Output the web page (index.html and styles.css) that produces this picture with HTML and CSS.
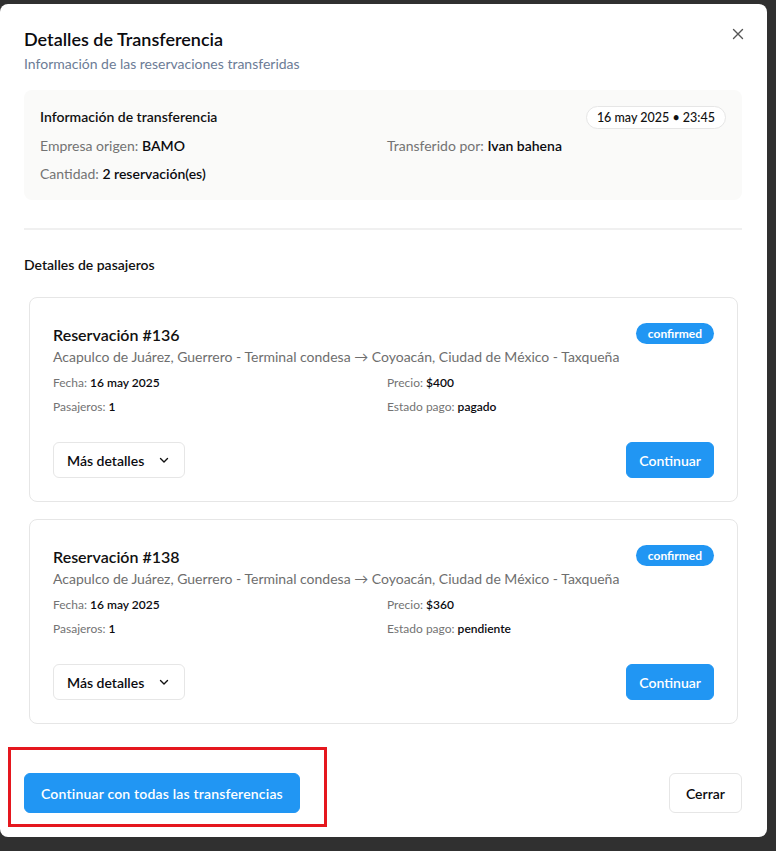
FILE: index.html
```html
<!DOCTYPE html>
<html lang="es">
<head>
<meta charset="utf-8">
<title>Detalles de Transferencia</title>
<link rel="stylesheet" href="styles.css">
</head>
<body>
<div class="modal">
  <button class="close" aria-label="Cerrar">
    <svg width="12" height="12" viewBox="0 0 12 12"><path d="M1.5 1.5 L10.5 10.5 M10.5 1.5 L1.5 10.5" stroke="#555" stroke-width="1.4" fill="none" stroke-linecap="round"/></svg>
  </button>
  <header class="head">
    <h1 class="title">Detalles de Transferencia</h1>
    <p class="subtitle">Información de las reservaciones transferidas</p>
  </header>

  <section class="info">
    <div class="info-top">
      <h2 class="info-title">Información de transferencia</h2>
      <span class="pill">16 may 2025 • 23:45</span>
    </div>
    <div class="info-grid">
      <div><span class="lbl">Empresa origen:</span> <b>BAMO</b></div>
      <div><span class="lbl">Transferido por:</span> <b>Ivan bahena</b></div>
      <div><span class="lbl">Cantidad:</span> <b>2 reservación(es)</b></div>
    </div>
  </section>

  <hr class="sep">

  <h2 class="section-title">Detalles de pasajeros</h2>

  <div class="list">
    <article class="card">
      <div class="card-top">
        <h3 class="card-title">Reservación #136</h3>
        <span class="badge">confirmed</span>
      </div>
      <p class="route">Acapulco de Juárez, Guerrero - Terminal condesa → Coyoacán, Ciudad de México - Taxqueña</p>
      <div class="meta">
        <div><span class="lbl">Fecha:</span> <b>16 may 2025</b></div>
        <div><span class="lbl">Precio:</span> <b>$400</b></div>
        <div><span class="lbl">Pasajeros:</span> <b>1</b></div>
        <div><span class="lbl">Estado pago:</span> <b>pagado</b></div>
      </div>
      <div class="actions">
        <button class="btn btn-outline">Más detalles
          <svg class="chev" width="12" height="12" viewBox="0 0 12 12"><path d="M2.5 4.5 L6 8 L9.5 4.5" stroke="#111" stroke-width="1.4" fill="none" stroke-linecap="round" stroke-linejoin="round"/></svg>
        </button>
        <button class="btn btn-primary">Continuar</button>
      </div>
    </article>

    <article class="card">
      <div class="card-top">
        <h3 class="card-title">Reservación #138</h3>
        <span class="badge">confirmed</span>
      </div>
      <p class="route">Acapulco de Juárez, Guerrero - Terminal condesa → Coyoacán, Ciudad de México - Taxqueña</p>
      <div class="meta">
        <div><span class="lbl">Fecha:</span> <b>16 may 2025</b></div>
        <div><span class="lbl">Precio:</span> <b>$360</b></div>
        <div><span class="lbl">Pasajeros:</span> <b>1</b></div>
        <div><span class="lbl">Estado pago:</span> <b>pendiente</b></div>
      </div>
      <div class="actions">
        <button class="btn btn-outline">Más detalles
          <svg class="chev" width="12" height="12" viewBox="0 0 12 12"><path d="M2.5 4.5 L6 8 L9.5 4.5" stroke="#111" stroke-width="1.4" fill="none" stroke-linecap="round" stroke-linejoin="round"/></svg>
        </button>
        <button class="btn btn-primary">Continuar</button>
      </div>
    </article>
  </div>

  <footer class="foot">
    <button class="btn btn-primary btn-lg btn-wide">Continuar con todas las transferencias</button>
    <button class="btn btn-outline btn-lg">Cerrar</button>
    <div class="highlight"></div>
  </footer>
</div>
</body>
</html>
```

FILE: styles.css
```css
* { box-sizing: border-box; }
html, body { margin: 0; padding: 0; }
body {
  background: #303030;
  height: 851px;
  overflow: hidden;
  font-family: Lato, "Noto Sans", sans-serif;
  color: #111;
  padding-top: 4px;
}
.modal {
  position: relative;
  width: 767px;
  height: 833px;
  background: #fff;
  border-radius: 8px;
  padding: 23px 25px 24px 24px;
  display: flex;
  flex-direction: column;
}
.close {
  position: absolute;
  top: 20px;
  right: 19px;
  width: 20px;
  height: 20px;
  padding: 0;
  border: 0;
  background: none;
  display: flex;
  align-items: center;
  justify-content: center;
}
.head { margin: 0; }
.title {
  margin: 0 0 3px;
  font-size: 18px;
  line-height: 24px;
  font-weight: 600;
  color: #0b0b0f;
}
.subtitle {
  margin: 0;
  font-size: 14px;
  line-height: 20px;
  color: #6c7c96;
}
.info {
  margin-top: 16px;
  background: #fafaf9;
  border-radius: 8px;
  padding: 16px;
  display: flex;
  flex-direction: column;
  gap: 8px;
}
.info-top {
  display: flex;
  justify-content: space-between;
  align-items: center;
  height: 22px;
}
.info-title {
  margin: 0;
  font-size: 14px;
  line-height: 20px;
  font-weight: 600;
}
.pill {
  font-size: 12.5px;
  line-height: 19px;
  padding: 1px 10px;
  border: 1px solid #e6e6e6;
  border-radius: 999px;
  background: #fff;
  font-weight: 500;
}
.info-grid {
  display: grid;
  grid-template-columns: 347px 1fr;
  row-gap: 8px;
  font-size: 14px;
  line-height: 20px;
}
.lbl { color: #737373; }
b { font-weight: 600; color: #0b0b0f; }
.sep {
  margin: 28px 0 0;
  border: 0;
  border-top: 2px solid #f0f0f0;
  height: 0;
}
.section-title {
  margin: 25px 0 0;
  font-size: 14px;
  line-height: 20px;
  font-weight: 600;
}
.list {
  margin-top: 22px;
  padding: 0 4px 0 5px;
  display: flex;
  flex-direction: column;
  gap: 17px;
}
.card {
  border: 1px solid #e6e6e6;
  border-radius: 8px;
  padding: 25px 23px 23px 23px;
}
.card-top {
  display: flex;
  justify-content: space-between;
  align-items: flex-start;
}
.card-title {
  margin: 0;
  font-size: 16px;
  line-height: 24px;
  font-weight: 600;
}
.badge {
  background: #2196f3;
  color: #fff;
  font-size: 12px;
  font-weight: 700;
  line-height: 16px;
  padding: 3px 12px 2px;
  border-radius: 999px;
}
.route {
  margin: 0;
  font-size: 14px;
  line-height: 20px;
  color: #6e6e6e;
}
.meta {
  margin-top: 8px;
  display: grid;
  grid-template-columns: 334px 1fr;
  row-gap: 8px;
  font-size: 12px;
  line-height: 16px;
}
.actions {
  margin-top: 27px;
  display: flex;
  justify-content: space-between;
  align-items: center;
}
.btn {
  font-family: inherit;
  font-size: 14px;
  font-weight: 600;
  height: 36px;
  border-radius: 6px;
  padding: 0 12px;
  display: inline-flex;
  align-items: center;
  gap: 14px;
  cursor: pointer;
}
.btn-outline {
  background: #fff;
  border: 1px solid #e6e6e6;
  color: #0b0b0f;
  padding: 0 14px 0 13px;
}
.btn-primary {
  background: #2196f3;
  border: 1px solid #2196f3;
  color: #fff;
}
.btn-lg { height: 40px; padding: 0 16px; }
.btn-wide { letter-spacing: 0.18px; }
.foot {
  margin-top: auto;
  position: relative;
  display: flex;
  justify-content: space-between;
  align-items: center;
}
.highlight {
  position: absolute;
  left: -16px;
  top: -26px;
  width: 319px;
  height: 80px;
  border: 3px solid #e5171e;
  pointer-events: none;
}
```
